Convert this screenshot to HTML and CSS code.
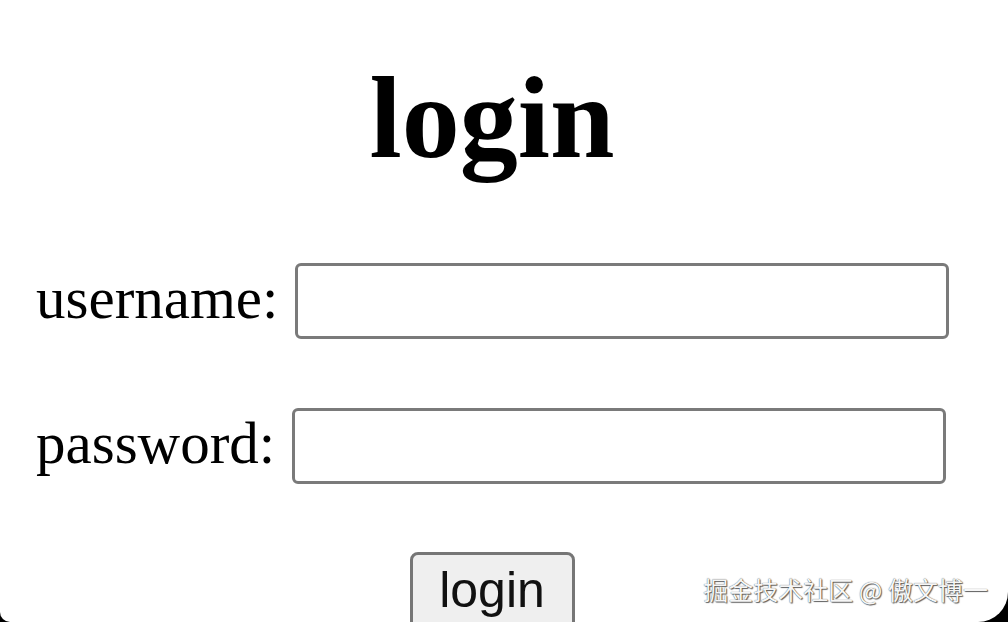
FILE: index.html
```html
<!DOCTYPE html>
<html lang="en">
<head>
<meta charset="utf-8">
<title>login</title>
<link rel="stylesheet" href="styles.css">
</head>
<body>
<div class="page">
  <h1 class="title">login</h1>
  <form class="form">
    <div class="row">
      <label class="label" for="u">username:</label>
      <input class="field" id="u" type="text">
    </div>
    <div class="row row-pw">
      <label class="label" for="p">password:</label>
      <input class="field field-pw" id="p" type="password">
    </div>
    <div class="actions">
      <button class="btn" type="button">login</button>
    </div>
  </form>
  <div class="watermark">掘金技术社区 @ 傲文博一</div>
</div>
</body>
</html>
```

FILE: styles.css
```css
html, body {
  margin: 0;
  padding: 0;
  background: #000;
}

.page {
  position: relative;
  width: 1008px;
  height: 622px;
  background: #fff;
  border-radius: 0 0 30px 10px;
  overflow: hidden;
  font-family: "Liberation Serif", "Times New Roman", serif;
  color: #000;
}

.title {
  margin: 60px 24px 0 0;
  font-size: 116px;
  line-height: 1;
  font-weight: bold;
  text-align: center;
}

.form {
  margin: 87px 0 0 0;
  display: flex;
  flex-direction: column;
}

.row {
  display: flex;
  align-items: center;
  gap: 17px;
  padding-left: 36px;
}

.row-pw {
  margin-top: 69px;
  gap: 17px;
}

.label {
  font-size: 59px;
  line-height: 1;
  position: relative;
  top: -3px;
}

.field {
  box-sizing: border-box;
  width: 654px;
  height: 76px;
  border: 3px solid #7a7a7a;
  border-radius: 6px;
  background: #fff;
  margin: 0;
  padding: 0;
}

.actions {
  margin-top: 68px;
  padding-right: 24px;
  display: flex;
  justify-content: center;
}

.btn {
  box-sizing: border-box;
  width: 165px;
  height: 82px;
  margin: 0;
  padding: 0 0 6px 0;
  background: #efefef;
  border: 3px solid #767676;
  border-radius: 8px;
  font-family: "Liberation Sans", Arial, sans-serif;
  font-size: 50px;
  line-height: 1;
  color: #111;
}

.watermark {
  position: absolute;
  right: 20px;
  top: 577px;
  font-family: "Noto Sans CJK SC", "Noto Sans", sans-serif;
  font-size: 25px;
  line-height: 1;
  color: #f6f6f6;
  text-shadow: 0 0 1px rgba(0, 0, 0, 0.75), 1px 1px 1px rgba(0, 0, 0, 0.6);
  white-space: nowrap;
}
```
